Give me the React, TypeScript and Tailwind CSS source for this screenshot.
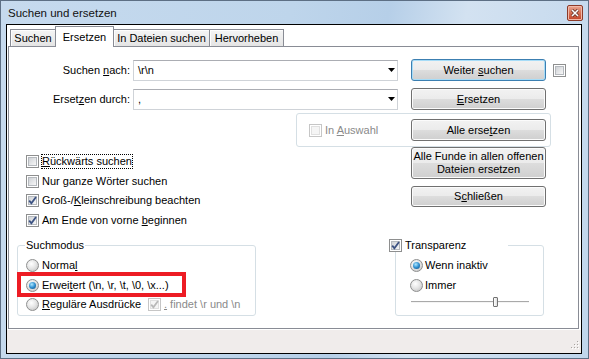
import React from "react";

const font = "font-['Liberation_Sans',Arial,sans-serif]";

function Check({ checked = false, disabled = false }: { checked?: boolean; disabled?: boolean }) {
  return (
    <span
      className={`relative flex h-[13px] w-[13px] shrink-0 items-center justify-center border bg-white ${
        disabled ? "border-[#c6c6c6]" : "border-[#8e8f8f]"
      }`}
    >
      <span
        className={`h-[9px] w-[9px] border ${
          disabled
            ? "border-[#e0e0e0] bg-[#f5f5f5]"
            : "border-[#b5b9be] bg-[linear-gradient(135deg,#cfd2d6,#f7f7f7)]"
        }`}
      />
      {checked && (
        <svg className="absolute left-0 top-0" width="11" height="11" viewBox="0 0 11 11">
          <path d="M2.2 5.6 L4.4 8.2 L9 2" fill="none" stroke={disabled ? "#b9b9b9" : "#3d5383"} strokeWidth="1.8" />
        </svg>
      )}
    </span>
  );
}

function Radio({ on = false }: { on?: boolean }) {
  return (
    <span className="flex h-[13px] w-[13px] shrink-0 items-center justify-center rounded-full border border-[#8e8f8f] bg-[radial-gradient(circle_at_40%_35%,#ffffff,#e6e6e6_45%,#bcbcbc_100%)]">
      {on && (
        <span className="h-[7px] w-[7px] rounded-full bg-[radial-gradient(circle_at_40%_35%,#aee8ff,#2f8fd0_50%,#0c4677_100%)]" />
      )}
    </span>
  );
}

function Btn({
  children,
  def = false,
  className = "",
}: {
  children: React.ReactNode;
  def?: boolean;
  className?: string;
}) {
  return (
    <div
      className={`flex w-[135px] shrink-0 flex-col items-center justify-center rounded-[3px] border text-center bg-[linear-gradient(180deg,#f2f2f2_0%,#ebebeb_50%,#dddddd_50%,#cfcfcf_100%)] ${
        def
          ? "border-[#3c7fb1] shadow-[inset_0_0_0_1px_#a7dcf7]"
          : "border-[#707070] shadow-[inset_0_0_0_1px_#fbfbfb]"
      } ${className}`}
    >
      {children}
    </div>
  );
}

function Combo({ value }: { value: string }) {
  return (
    <div className="flex h-[21px] w-[265px] shrink-0 items-center border border-[#cfd3d8] border-t-[#abadb3] bg-white pl-[4px] pr-[2px]">
      <span className="flex-1">{value}</span>
      <svg width="7" height="4" viewBox="0 0 7 4">
        <path d="M0 0H7L3.5 4Z" fill="#000" />
      </svg>
    </div>
  );
}

function Tab({ label, className = "", w }: { label: string; className?: string; w: string }) {
  return (
    <div
      className={`flex h-[17px] ${w} items-center justify-center border-t border-r border-[#898c95] bg-[linear-gradient(180deg,#f5f5f5,#e4e4e4)] shadow-[inset_1px_1px_0_#fdfdfd] ${className}`}
    >
      {label}
    </div>
  );
}

export default function App() {
  return (
    <div
      className={`flex h-[359px] w-[589px] flex-col border border-[#5d6f84] bg-[linear-gradient(100deg,#c6daee_0%,#bed5eb_45%,#b6cfe8_60%,#d3e2f1_72%,#c0d6ec_100%)] pb-[4px] pl-[5px] pr-[6px] text-[11px] leading-[13px] text-black ${font}`}
    >
      {/* title bar */}
      <div className="flex h-[23px] shrink-0 items-start justify-between pl-[2px]">
        <span className="mt-[5px] text-[11.5px] leading-[14px] text-[#111]">Suchen und ersetzen</span>
        <div className="mr-[-1px] mt-[4px] flex h-[16px] w-[16px] items-center justify-center rounded-[2px] border border-[#8c3a29] bg-[linear-gradient(180deg,#eaa692,#d46e52_50%,#c2452a_100%)] shadow-[inset_0_0_0_1px_#f2b9a8]">
          <svg width="8" height="8" viewBox="0 0 8 8">
            <path d="M1 1L7 7M7 1L1 7" stroke="#5a2a20" strokeWidth="3" />
            <path d="M1 1L7 7M7 1L1 7" stroke="#fff" strokeWidth="1.6" />
          </svg>
        </div>
      </div>

      {/* client */}
      <div className="flex h-[330px] w-[576px] flex-col border border-black bg-white">
        {/* tabs */}
        <div className="relative z-10 flex h-[21px] shrink-0 items-end pl-[3px]">
          <Tab label="Suchen" w="w-[45px]" className="border-l border-r-0" />
          <div className="mb-[-1px] flex h-[21px] w-[59px] items-center justify-center border border-b-0 border-[#898c95] bg-white">
            Ersetzen
          </div>
          <Tab label="In Dateien suchen" w="w-[96px]" />
          <Tab label="Hervorheben" w="w-[74px]" />
        </div>

        {/* panel */}
        <div className="ml-px flex h-[283px] w-[571px] shrink-0 flex-col border border-[#898c95] bg-white">
          <div className="mt-[12px] flex h-[22px] items-center">
            <span className="w-[121px] text-right">
              Suchen <u>n</u>ach:
            </span>
            <div className="ml-[3px]">
              <Combo value={"\\r\\n"} />
            </div>
            <Btn def className="ml-[13px] h-[22px]">
              <span>
                Weiter <u>s</u>uchen
              </span>
            </Btn>
            <div className="ml-[7px]">
              <Check />
            </div>
          </div>

          <div className="mt-[7px] flex h-[22px] items-center">
            <span className="w-[121px] text-right">
              Erset<u>z</u>en durch:
            </span>
            <div className="ml-[3px]">
              <Combo value="," />
            </div>
            <Btn className="ml-[13px] h-[22px]">
              <span>
                <u>E</u>rsetzen
              </span>
            </Btn>
          </div>

          <div className="ml-[287px] mt-[3px] flex h-[34px] w-[255px] items-center rounded-[3px] border border-[#d5dfe5]">
            <div className="flex w-[114px] items-center gap-[3px] pl-[12px] text-[#8a8a8a]">
              <Check disabled />
              <span>
                In <u>A</u>uswahl
              </span>
            </div>
            <Btn className="h-[22px]">
              <span>
                Alle erse<u>t</u>zen
              </span>
            </Btn>
          </div>

          <div className="flex">
            <div className="flex w-[402px] flex-col pl-[17px] pt-[5px]">
              <div className="flex h-[19.5px] items-center gap-[2px]">
                <Check />
                <span className="px-[1px] py-[1px] outline-1 outline-offset-[-1px] outline-dotted outline-black">
                  <u>R</u>ückwärts suchen
                </span>
              </div>
              <div className="flex h-[19.5px] items-center gap-[2px]">
                <Check />
                <span className="px-[1px]">Nur ganze Wörter suchen</span>
              </div>
              <div className="flex h-[19.5px] items-center gap-[2px]">
                <Check checked />
                <span className="px-[1px]">
                  Groß-/<u>K</u>leinschreibung beachten
                </span>
              </div>
              <div className="flex h-[19.5px] items-center gap-[2px]">
                <Check checked />
                <span className="px-[1px]">
                  Am Ende von vorne <u>b</u>eginnen
                </span>
              </div>
            </div>
            <div className="flex flex-col">
              <Btn className="h-[32px]">
                <span>Alle Funde in allen offenen</span>
                <span>Dateien ersetzen</span>
              </Btn>
              <Btn className="mt-[7px] h-[21px]">
                <span>
                  S<u>c</u>hließen
                </span>
              </Btn>
            </div>
          </div>

          <div className="mt-[9px] flex items-start">
            <fieldset className="ml-[8px] w-[239px] rounded-[3px] border border-[#d5dfe5] pt-[4px]">
              <legend className="ml-[7px] px-[1px] leading-[13px]">Suchmodus</legend>
              <div className="flex h-[19.5px] items-center gap-[2px] pl-[8px]">
                <Radio />
                <span className="px-[1px]">
                  Norma<u>l</u>
                </span>
              </div>
              <div className="relative flex h-[19.5px] items-center gap-[2px] pl-[8px]">
                <Radio on />
                <span className="px-[1px]">
                  Erwei<u>t</u>ert {"(\\n, \\r, \\t, \\0, \\x...)"}
                </span>
                <div className="absolute left-[-1px] top-[-4px] h-[25px] w-[169px] border-4 border-[#ed1c24]" />
              </div>
              <div className="flex h-[19.5px] items-center gap-[2px] pl-[8px]">
                <Radio />
                <span className="w-[105px] px-[1px]">
                  <u>R</u>eguläre Ausdrücke
                </span>
                <Check checked disabled />
                <span className="px-[1px] text-[#8a8a8a]">
                  <u>.</u> findet {"\\r"} und {"\\n"}
                </span>
              </div>
            </fieldset>

            <fieldset className="ml-[139px] w-[149px] rounded-[3px] border border-[#d5dfe5] pt-[4px]">
              <legend className="ml-[-7px] flex w-[119px] items-center gap-[3px] bg-white leading-[13px]">
                <Check checked />
                <span>Transparenz</span>
              </legend>
              <div className="flex h-[19.5px] items-center gap-[1px] pl-[14px]">
                <Radio on />
                <span className="px-[1px]">Wenn inaktiv</span>
              </div>
              <div className="flex h-[19.5px] items-center gap-[1px] pl-[14px]">
                <Radio />
                <span className="px-[1px]">Immer</span>
              </div>
              <div className="h-[19.5px] pl-[15px] pt-[2px]">
                <div className="relative h-[10px] w-[118px]">
                  <div className="absolute left-0 right-0 top-[4px] h-[2px] border-t border-[#a9a9a9] border-b border-b-[#f4f4f4]" />
                  <div className="absolute left-[82px] top-0 h-[10px] w-[5px] rounded-[1px] border border-[#727272] bg-[linear-gradient(90deg,#ffffff,#dedede)]" />
                </div>
              </div>
            </fieldset>
          </div>
        </div>

        <div className="h-px shrink-0" />

        {/* status bar */}
        <div className="flex flex-1 items-end justify-end bg-[#f0eceb] pb-[2px] pr-[2px]">
          <svg width="10" height="10" viewBox="0 0 10 10">
            {[
              [8, 0],
              [5, 3],
              [8, 3],
              [2, 6],
              [5, 6],
              [8, 6],
            ].map(([x, y]) => (
              <g key={`${x}-${y}`}>
                <rect x={x + 1} y={y + 1} width="1" height="1" fill="#ffffff" />
                <rect x={x} y={y} width="1" height="1" fill="#a8a4a0" />
              </g>
            ))}
          </svg>
        </div>
      </div>
    </div>
  );
}
